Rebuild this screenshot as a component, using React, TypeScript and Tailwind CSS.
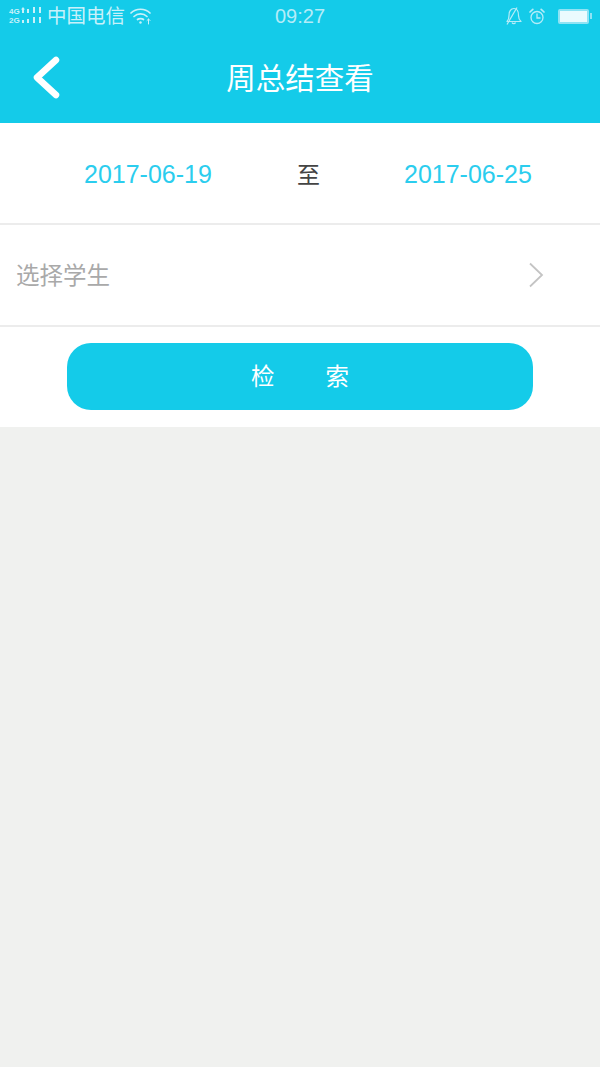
const FONT = "font-['Noto_Sans_CJK_SC','Noto_Sans',sans-serif]";

function SignalIcon() {
  return (
    <svg width="35" height="18" viewBox="0 0 35 18" fill="#c9f1fa">
      <text x="0" y="7" fontSize="8" fontWeight="700" fontFamily="Liberation Sans, sans-serif">4G</text>
      <text x="0" y="16" fontSize="8" fontWeight="700" fontFamily="Liberation Sans, sans-serif">2G</text>
      <path d="M12 2.5L14 0L16 2.5H15V6H13V2.5Z" />
      <rect x="13" y="13" width="2" height="3" />
      <rect x="18" y="2" width="2" height="4" />
      <rect x="24" y="0" width="2" height="6" />
      <rect x="30" y="0" width="2" height="6" />
      <rect x="18" y="12" width="2" height="4" />
      <rect x="24" y="10" width="2" height="6" />
      <rect x="30" y="10" width="2" height="6" />
    </svg>
  );
}

function WifiIcon() {
  return (
    <svg width="21" height="18" viewBox="0 0 21 18" fill="none" stroke="#c9f1fa" strokeWidth="1.7" strokeLinecap="round">
      <path d="M1 6C6 1 15 1 20 6" />
      <path d="M4 9.5C7.5 6 13.5 6 17 9.5" />
      <path d="M7.5 12.5C9 11.2 12 11.2 13.5 12.5" />
      <circle cx="10.5" cy="15.5" r="1.2" fill="#c9f1fa" stroke="none" />
      <path d="M18.5 12V17" strokeWidth="1" />
      <path d="M17 13.5L18.5 12L20 13.5" strokeWidth="1" />
    </svg>
  );
}

function BellOffIcon() {
  return (
    <svg width="16" height="18" viewBox="0 0 16 18" fill="none" stroke="#b5ecf8" strokeWidth="1.2" strokeLinejoin="round">
      <path d="M1 14.5C2.5 13 3 11.5 3 8.5C3 4 5 1.5 8 1.5C11 1.5 12.5 4 12.5 8.5C12.5 11.5 13.5 13 15 14.5Z" />
      <path d="M6 15.5C6.5 17 9 17 9.5 15.5" />
      <path d="M1 17.5L11 0.5" />
    </svg>
  );
}

function AlarmIcon() {
  return (
    <svg width="16" height="17" viewBox="0 0 16 17" fill="none" stroke="#b5ecf8" strokeWidth="1.3" strokeLinecap="round">
      <circle cx="8" cy="9.5" r="6" />
      <path d="M8 6V10H11" />
      <path d="M1 4L3.8 1.4" strokeWidth="1.7" />
      <path d="M15 4L12.2 1.4" strokeWidth="1.7" />
    </svg>
  );
}

function BatteryIcon() {
  return (
    <div className="flex items-center">
      <div className="w-[31px] h-[15px] border-2 border-[#8fe3f4] rounded-[2px]">
        <div className="w-full h-full bg-[#eafbfe]" />
      </div>
      <div className="ml-[1px] w-[2px] h-[6px] bg-[#8fe3f4]" />
    </div>
  );
}

function StatusBar() {
  return (
    <div className="relative h-[32px] flex items-center justify-between pl-[9px] pr-[8px]">
      <div className="flex items-center">
        <SignalIcon />
        <span className="ml-[3px] text-[19.5px] leading-[30px] h-[32px] text-[#c9f1fa]">中国电信</span>
        <span className="ml-[5px]">
          <WifiIcon />
        </span>
      </div>
      <span className="absolute left-[275px] top-0 leading-[32px] text-[20px] text-[#b5ecf8] font-['Liberation_Sans',sans-serif]">
        09:27
      </span>
      <div className="flex items-center">
        <BellOffIcon />
        <span className="ml-[7px] mr-[13px]">
          <AlarmIcon />
        </span>
        <BatteryIcon />
      </div>
    </div>
  );
}

function Header() {
  return (
    <div className="bg-[#14cbe9] h-[123px] flex flex-col">
      <StatusBar />
      <div className="relative flex-1 flex items-center justify-center pb-[3px]">
        <svg className="absolute left-[30px] top-[22px]" width="32" height="46" viewBox="0 0 32 46" fill="none" stroke="#fff" strokeWidth="6.5" strokeLinecap="round" strokeLinejoin="round">
          <path d="M26 6L7 23.5L26 41" />
        </svg>
        <span className="text-[29.5px] leading-[40px] text-white">周总结查看</span>
      </div>
    </div>
  );
}

export default function App() {
  return (
    <div className={`${FONT} min-h-[1067px] bg-[#f0f1ef] flex flex-col`}>
      <Header />
      <div className="bg-white">
        <div className="h-[102px] flex items-center border-b-2 border-[#ececec] pt-[4px]">
          <span className="w-[297px] pl-[84px] text-[25px] text-[#2bcdee] font-['Liberation_Sans',sans-serif]">2017-06-19</span>
          <span className="w-[107px] text-[23px] text-[#444] pb-[4px]">至</span>
          <span className="text-[25px] text-[#2bcdee] font-['Liberation_Sans',sans-serif]">2017-06-25</span>
        </div>
        <div className="h-[102px] flex items-center justify-between border-b-2 border-[#ececec] pl-[16px] pr-[56px]">
          <span className="text-[23.5px] text-[#a9a9a9]">选择学生</span>
          <svg width="16" height="26" viewBox="0 0 16 26" fill="none" stroke="#c4c4c4" strokeWidth="1.8">
            <path d="M2 1.5L14 13L2 24.5" />
          </svg>
        </div>
        <div className="h-[100px] pt-[16px] px-[67px]">
          <div className="h-[67px] rounded-[24px] bg-[#14cbe9] flex items-center justify-center text-[23.5px] text-white gap-[51px] pb-[1px]">
            <span>检</span>
            <span>索</span>
          </div>
        </div>
      </div>
    </div>
  );
}
